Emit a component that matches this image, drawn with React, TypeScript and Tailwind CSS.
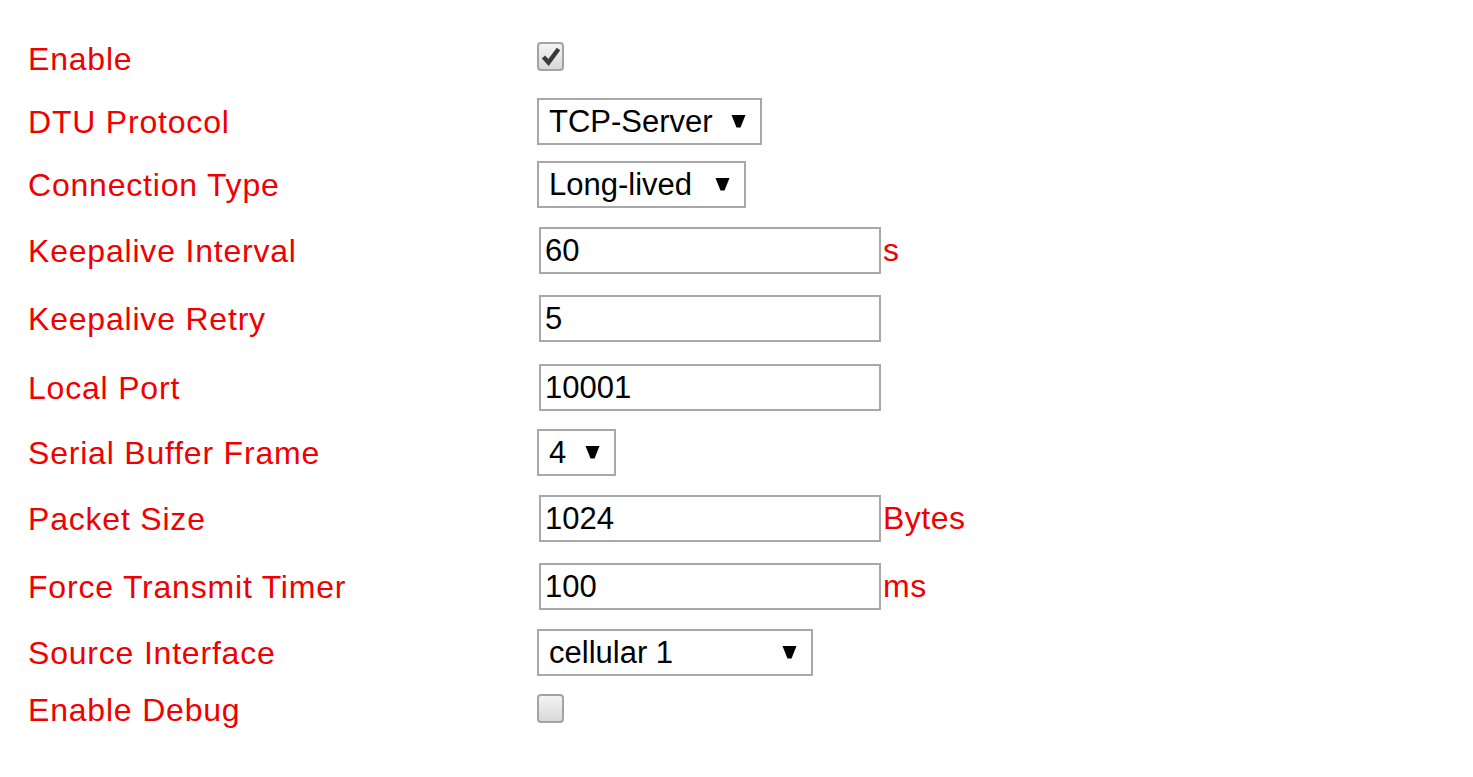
import React from "react";

const font = { fontFamily: '"Liberation Sans", Arial, sans-serif' };

function Arrow() {
  return (
    <svg width="15" height="15" viewBox="0 0 15 15" className="shrink-0">
      <path d="M0.5 1 H14.5 L9.5 13.5 H5.5 Z" fill="#000" />
    </svg>
  );
}

function Checkbox({ checked }: { checked?: boolean }) {
  return (
    <div className="w-[27px] h-[29px] rounded-[4px] border-2 border-[#a3a3a3] bg-gradient-to-b from-[#f4f4f4] to-[#d8d8d8] flex items-center justify-center">
      {checked && (
        <svg width="20" height="20" viewBox="0 0 20 20">
          <path d="M2.5 11 L7.5 16.5 L17.5 3" stroke="#3a3a3a" strokeWidth="4.4" fill="none" strokeLinejoin="miter" />
        </svg>
      )}
    </div>
  );
}

function Select({ value, w }: { value: string; w: string }) {
  return (
    <div className={`${w} h-[47px] border-2 border-[#a8a8a8] bg-white flex items-center justify-between pl-[10px] pr-[14px] text-[31px] text-black leading-none`}>
      <span>{value}</span>
      <Arrow />
    </div>
  );
}

function Input({ value }: { value: string }) {
  return (
    <div className="ml-[2px] w-[342px] h-[47px] border-2 border-[#a8a8a8] bg-white flex items-center pl-[4px] text-[31px] text-black leading-none">
      {value}
    </div>
  );
}

function Row({ label, mt, children }: { label: string; mt: string; children: React.ReactNode }) {
  return (
    <div className={`${mt} h-[48px] flex items-center`}>
      <div className="w-[509px] shrink-0 text-[32px] tracking-[0.8px] text-[#f00000] leading-none pt-[2px]">{label}</div>
      <div className="flex items-center">{children}</div>
    </div>
  );
}

function Unit({ t }: { t: string }) {
  return <span className="ml-[2px] text-[32px] tracking-[0.5px] text-[#f00000] leading-none">{t}</span>;
}

export default function App() {
  return (
    <div className="w-[1473px] h-[777px] bg-white pl-[28px] pt-[34px]" style={font}>
      <Row label="Enable" mt="mt-0">
        <div className="-mt-[4px]"><Checkbox checked /></div>
      </Row>
      <Row label="DTU Protocol" mt="mt-[15px]">
        <Select value="TCP-Server" w="w-[225px]" />
      </Row>
      <Row label="Connection Type" mt="mt-[15px]">
        <Select value="Long-lived" w="w-[209px]" />
      </Row>
      <Row label="Keepalive Interval" mt="mt-[18px]">
        <Input value="60" />
        <Unit t="s" />
      </Row>
      <Row label="Keepalive Retry" mt="mt-[20px]">
        <Input value="5" />
      </Row>
      <Row label="Local Port" mt="mt-[21px]">
        <Input value="10001" />
      </Row>
      <Row label="Serial Buffer Frame" mt="mt-[17px]">
        <Select value="4" w="w-[79px]" />
      </Row>
      <Row label="Packet Size" mt="mt-[18px]">
        <Input value="1024" />
        <Unit t="Bytes" />
      </Row>
      <Row label="Force Transmit Timer" mt="mt-[20px]">
        <Input value="100" />
        <Unit t="ms" />
      </Row>
      <Row label="Source Interface" mt="mt-[18px]">
        <Select value="cellular 1" w="w-[276px]" />
      </Row>
      <Row label="Enable Debug" mt="mt-[9px]">
        <div className="-mt-[1px]"><Checkbox /></div>
      </Row>
    </div>
  );
}
